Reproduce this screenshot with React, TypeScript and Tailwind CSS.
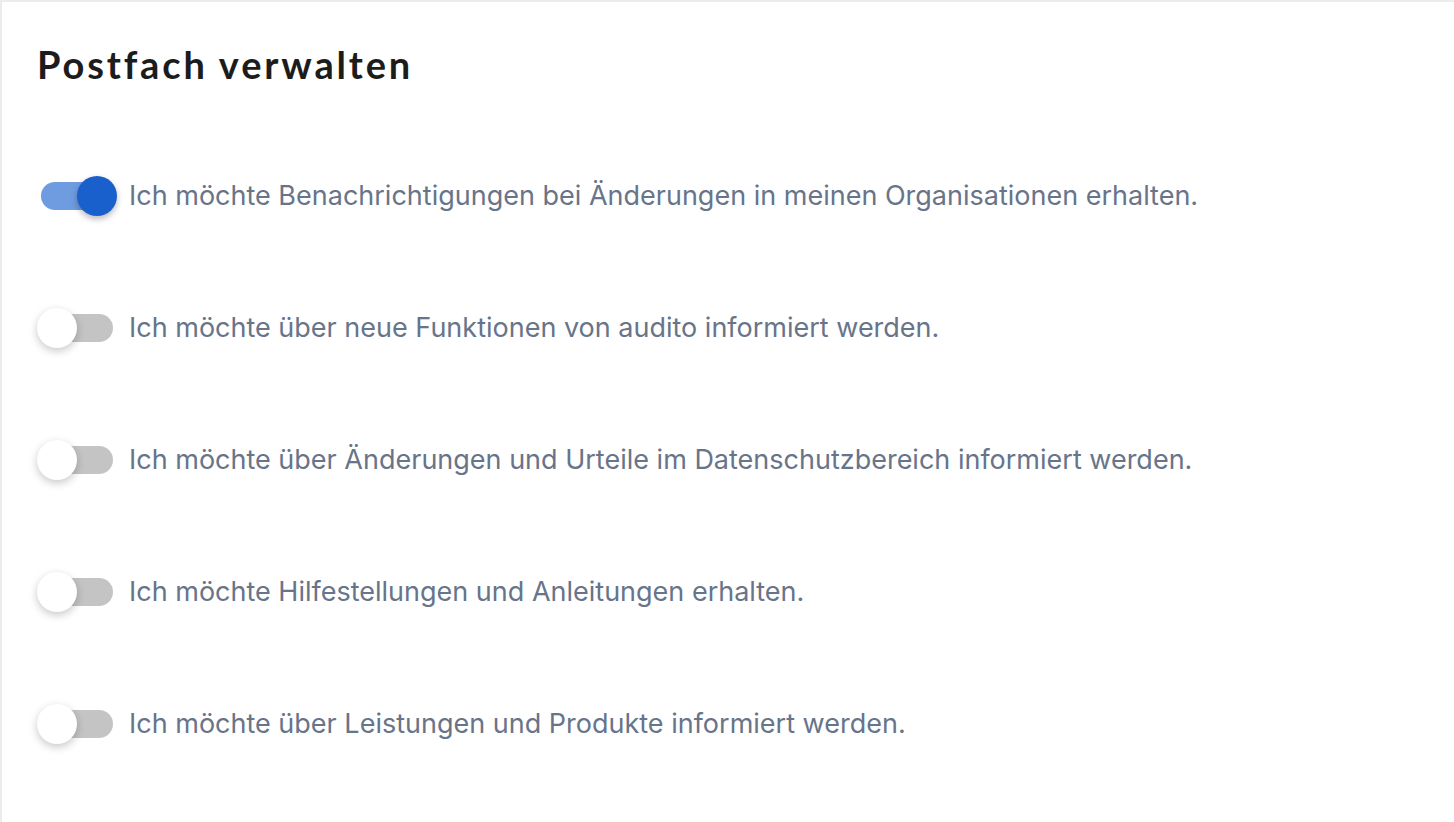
const OPTIONS = [
  {
    id: "org",
    label: "Ich möchte Benachrichtigungen bei Änderungen in meinen Organisationen erhalten.",
    enabled: true,
  },
  {
    id: "features",
    label: "Ich möchte über neue Funktionen von audito informiert werden.",
    enabled: false,
  },
  {
    id: "privacy",
    label: "Ich möchte über Änderungen und Urteile im Datenschutzbereich informiert werden.",
    enabled: false,
  },
  {
    id: "help",
    label: "Ich möchte Hilfestellungen und Anleitungen erhalten.",
    enabled: false,
  },
  {
    id: "products",
    label: "Ich möchte über Leistungen und Produkte informiert werden.",
    enabled: false,
  },
];

function Toggle({ enabled }: { enabled: boolean }) {
  return (
    <span className="relative inline-flex h-10 w-20 shrink-0 items-center">
      <span
        className={
          enabled
            ? "ml-1 h-7 w-[72px] rounded-full bg-[#6f9be0]"
            : "ml-1 h-7 w-[72px] rounded-full bg-[#c4c4c4]"
        }
      />
      <span
        className={
          enabled
            ? "absolute left-10 top-0 h-10 w-10 rounded-full bg-[#1a60cc] shadow-[0_3px_6px_rgba(0,0,0,0.28)]"
            : "absolute left-0 top-0 h-10 w-10 rounded-full bg-white shadow-[0_3px_8px_rgba(0,0,0,0.22)]"
        }
      />
    </span>
  );
}

export default function App() {
  return (
    <main className="min-h-[822px] w-full border-l-2 border-t-2 border-[#ececec] bg-white">
      <section className="px-[35px] pt-[40px]">
        <h1 className="font-['Lato',sans-serif] text-[38px] font-bold leading-[44px] tracking-[0.075em] text-[#1c1c1c]">
          Postfach verwalten
        </h1>
        <ul className="mt-[90px] flex flex-col gap-[92px]">
          {OPTIONS.map((option) => (
            <li key={option.id} className="flex items-center gap-3">
              <Toggle enabled={option.enabled} />
              <span className="font-['Inter',sans-serif] text-[27px] leading-10 text-[#687489]">
                {option.label}
              </span>
            </li>
          ))}
        </ul>
      </section>
    </main>
  );
}
